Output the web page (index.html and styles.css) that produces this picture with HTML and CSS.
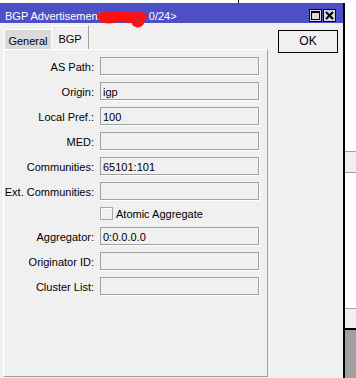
FILE: index.html
```html
<!DOCTYPE html>
<html>
<head>
<meta charset="utf-8">
<link rel="stylesheet" href="styles.css">
</head>
<body>
<div class="screen">
  <div class="topstrip"><div class="topmark"></div></div>
  <div class="main">
    <div class="window">
      <div class="titlebar">
        <div class="title">
          <span>BGP Advertisement</span>
          <svg class="redact" width="54" height="18" viewBox="0 0 54 18">
            <path d="M5 6 C12 4 22 4 30 5 C38 6 44 4 49 6" fill="none" stroke="#ff1010" stroke-width="6" stroke-linecap="round"/>
            <path d="M6 9 C14 8 24 10 34 8 C40 7 46 8 48 9" fill="none" stroke="#ff1010" stroke-width="5" stroke-linecap="round"/>
            <path d="M8 11 C13 13 18 12 24 10" fill="none" stroke="#ff1010" stroke-width="3" stroke-linecap="round"/>
            <path d="M39 8 C38 12 39 14 42 15 C46 15 48 12 47 8" fill="none" stroke="#ff1010" stroke-width="5" stroke-linecap="round"/>
            <path d="M29 10 C32 12 35 12 37 10" fill="none" stroke="#ff1010" stroke-width="3" stroke-linecap="round"/>
          </svg>
          <span>0/24&gt;</span>
        </div>
        <div class="tbtns">
          <div class="tbtn">
            <svg width="11" height="11" viewBox="0 0 11 11"><rect x="1.5" y="1.5" width="8" height="8" fill="none" stroke="#000" stroke-width="1"/><rect x="1" y="1" width="9" height="2" fill="#000"/></svg>
          </div>
          <div class="tbtn">
            <svg width="11" height="11" viewBox="0 0 11 11"><path d="M2 2 L9 9 M9 2 L2 9" stroke="#000" stroke-width="2"/></svg>
          </div>
        </div>
      </div>
      <div class="content">
        <div class="leftcol">
          <div class="tabs">
            <div class="tab">General</div>
            <div class="tab active">BGP</div>
          </div>
          <div class="panel">
            <div class="form">
              <div class="lbl">AS Path:</div><div class="fld"></div>
              <div class="lbl">Origin:</div><div class="fld">igp</div>
              <div class="lbl">Local Pref.:</div><div class="fld">100</div>
              <div class="lbl">MED:</div><div class="fld"></div>
              <div class="lbl">Communities:</div><div class="fld">65101:101</div>
              <div class="lbl">Ext. Communities:</div><div class="fld"></div>
              <div class="cbrow"><div class="cb"></div><span class="cbtext">Atomic Aggregate</span></div>
              <div class="lbl">Aggregator:</div><div class="fld">0:0.0.0.0</div>
              <div class="lbl">Originator ID:</div><div class="fld"></div>
              <div class="lbl">Cluster List:</div><div class="fld"></div>
            </div>
          </div>
        </div>
        <div class="rightcol">
          <div class="ok">OK</div>
        </div>
      </div>
    </div>
    <div class="bgside">
      <div class="bg-white1"></div>
      <div class="bg-band1"></div>
      <div class="bg-white2"></div>
      <div class="bg-band2"></div>
      <div class="bg-gray"></div>
    </div>
  </div>
</div>
</body>
</html>
```
FILE: styles.css
```css
* { box-sizing: border-box; }
html, body { margin: 0; padding: 0; }
body {
  width: 356px;
  height: 378px;
  overflow: hidden;
  background: #fff;
  font-family: "Liberation Sans", Arial, sans-serif;
  font-size: 11px;
  color: #000;
}
.screen { width: 356px; height: 378px; display: flex; flex-direction: column; }
.topstrip { height: 3px; background: #fff; flex: none; }
.topmark { width: 239px; height: 3px; border-right: 1px solid #000; }
.main { display: flex; flex: 1; }
.window {
  width: 345px;
  background: #f0f0f0;
  border-right: 2px solid #000;
  display: flex;
  flex-direction: column;
}
.titlebar {
  height: 20px;
  background: #4d4fc6;
  display: flex;
  justify-content: space-between;
  align-items: flex-start;
  padding: 0 7px 0 5px;
  color: #fff;
}
.title {
  display: flex;
  align-items: flex-start;
  margin-top: 6px;
  line-height: 14px;
  white-space: nowrap;
}
.redact { margin: 1px 0 0 -6px; flex: none; }
.tbtns { display: flex; gap: 1px; margin-top: 6px; }
.tbtn {
  width: 13px;
  height: 13px;
  background: #d8d8d8;
  border: 1px solid #000;
  display: flex;
  align-items: center;
  justify-content: center;
}
.tbtn svg { display: block; }
.content { display: flex; flex: 1; }
.leftcol { width: 268px; padding-left: 3px; display: flex; flex-direction: column; }
.tabs { height: 26px; display: flex; align-items: flex-end; padding-left: 1px; }
.tab {
  width: 47px;
  height: 20px;
  background: #dadada;
  border-top: 1px solid #fff;
  border-left: 1px solid #fff;
  text-align: center;
  padding-top: 2px;
  line-height: 18px;
}
.tab.active {
  width: 38px;
  height: 24px;
  background: #f0f0f0;
  border-right: 1px solid #a0a0a0;
  padding-top: 4px;
}
.panel {
  width: 265px;
  height: 328px;
  border-top: 1px solid #fff;
  border-left: 1px solid #fff;
  border-right: 1px solid #a0a0a0;
  border-bottom: 1px solid #a0a0a0;
}
.form {
  display: grid;
  grid-template-columns: 90px 159px;
  column-gap: 6px;
  row-gap: 7px;
  padding-top: 7px;
}
.lbl {
  height: 18px;
  text-align: right;
  padding-top: 2px;
  line-height: 16px;
  white-space: nowrap;
}
.fld {
  height: 18px;
  border: 1px solid #a0a0a0;
  box-shadow: 1px 1px 0 #fff;
  padding: 1px 2px 0;
  line-height: 16px;
}
.cbrow {
  grid-column: 2;
  height: 13px;
  display: flex;
  gap: 3px;
}
.cb {
  width: 13px;
  height: 13px;
  border: 1px solid #a8a8a8;
  box-shadow: inset 1px 1px 0 #fff;
  background: #f0f0f0;
}
.cbtext { line-height: 13px; padding-top: 1px; }
.rightcol { flex: 1; padding: 7px 0 0 10px; }
.ok {
  width: 60px;
  height: 23px;
  border: 1px solid #000;
  background: #f0f0f0;
  text-align: center;
  font-size: 12px;
  line-height: 21px;
}
.bgside { width: 11px; display: flex; flex-direction: column; }
.bg-white1 { height: 148px; background: #fff; }
.bg-band1 { height: 22px; background: #f0f0f0; border-top: 1px solid #a0a0a0; border-bottom: 1px solid #a0a0a0; }
.bg-white2 { height: 135px; background: #fff; }
.bg-band2 { height: 22px; background: #f0f0f0; border-top: 1px solid #a0a0a0; border-bottom: 2px solid #000; }
.bg-gray { flex: 1; background: #a0a0a0; }
```
